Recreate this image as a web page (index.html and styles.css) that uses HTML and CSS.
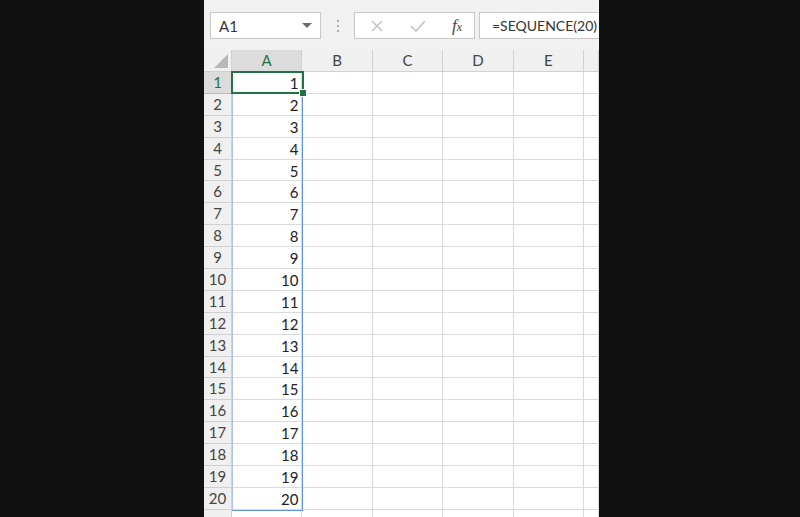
FILE: index.html
```html
<!DOCTYPE html>
<html>
<head>
<title>SEQUENCE</title>
<link rel="stylesheet" href="styles.css">
</head>
<body>
<div class="sheet">
  <div class="bar">
    <div class="namebox"><span>A1</span><span class="caret"></span></div>
    <div class="dots"><i></i><i></i><i></i></div>
    <div class="btns">
      <svg width="14" height="14" viewBox="0 0 14 14"><path d="M2 2 L12 12 M12 2 L2 12" stroke="#c4c4c4" stroke-width="1.6" fill="none"/></svg>
      <svg width="16" height="14" viewBox="0 0 16 14"><path d="M1 7 L6 12 L15 2" stroke="#c4c4c4" stroke-width="1.6" fill="none"/></svg>
      <span class="fx">f<small>x</small></span>
    </div>
    <div class="formula">=SEQUENCE(20)</div>
  </div>

  <div class="grid" id="grid">
    <div class="corner"></div>
    <div class="colhead sel">A</div>
    <div class="colhead">B</div>
    <div class="colhead">C</div>
    <div class="colhead">D</div>
    <div class="colhead">E</div>
    <div class="colhead"></div>
  </div>
  <div class="spill"></div>
  <div class="cursor"><span class="handle"></span></div>
</div>
<script>
var grid = document.getElementById('grid');
for (var r = 1; r <= 21; r++) {
  var html = '<div class="rowhead' + (r == 1 ? ' sel' : '') + '">' + (r <= 20 ? r : '') + '</div>';
  html += '<div class="cell num">' + (r <= 20 ? r : '') + '</div>';
  for (var c = 0; c < 5; c++) html += '<div class="cell"></div>';
  grid.insertAdjacentHTML('beforeend', html);
}
</script>
</body>
</html>
```

FILE: styles.css
```css
body {
  margin: 0;
  background: #111111;
  font-family: Lato, "Open Sans", sans-serif;
  overflow: hidden;
}

.sheet {
  position: relative;
  width: 395px;
  height: 517px;
  margin-left: 204px;
  background: #ffffff;
  overflow: hidden;
}

/* formula bar */
.bar {
  height: 50px;
  background: #f1f1f1;
  display: flex;
  align-items: flex-start;
  padding: 12px 0 0 6px;
  box-sizing: border-box;
}
.bar > div { flex-shrink: 0; }
.namebox {
  width: 111px;
  height: 27px;
  box-sizing: border-box;
  background: #fff;
  border: 1px solid #c8c8c8;
  display: flex;
  align-items: center;
  justify-content: space-between;
  padding: 0 8px 0 8px;
  font-size: 15px;
  color: #333;
}
.caret {
  width: 0; height: 0;
  border-left: 5px solid transparent;
  border-right: 5px solid transparent;
  border-top: 5px solid #6a6a6a;
}
.dots {
  width: 33px;
  display: flex;
  flex-direction: column;
  align-items: center;
  gap: 3px;
  padding-top: 8px;
}
.dots i { width: 2px; height: 2px; background: #b0b0b0; }
.btns {
  width: 121px;
  height: 27px;
  box-sizing: border-box;
  background: #fff;
  border: 1px solid #c8c8c8;
  display: flex;
  align-items: center;
  gap: 26px;
  padding-left: 15px;
}
.fx {
  font-family: "Liberation Serif", serif;
  font-style: italic;
  font-size: 17px;
  color: #444;
}
.fx small { font-size: 12px; }
.bar > .formula {
  margin-left: 4px;
  flex: 1 1 auto;
  min-width: 0;
  height: 27px;
  box-sizing: border-box;
  background: #fff;
  border: 1px solid #c8c8c8;
  border-right: none;
  padding-left: 12px;
  line-height: 25px;
  font-size: 14px;
  color: #333;
  white-space: nowrap;
}

/* cells */
.grid {
  display: grid;
  grid-template-columns: 28px repeat(5, 70.4px) 1fr;
  grid-template-rows: 22px;
  grid-auto-rows: 21.9px;
  font-size: 15px;
  color: #222;
}
.corner, .colhead, .rowhead {
  background: #f0f0f0;
  border-right: 1px solid #d0d0d0;
  border-bottom: 1px solid #d0d0d0;
  color: #444;
}
.corner { position: relative; }
.corner:after {
  content: "";
  position: absolute;
  right: 3px; bottom: 3px;
  border-left: 14px solid transparent;
  border-bottom: 14px solid #b8b8b8;
}
.colhead { text-align: center; line-height: 21px; }
.rowhead { text-align: center; line-height: 21px; }
.colhead.sel, .rowhead.sel {
  background: #dcdcdc;
  color: #217346;
  border-bottom-color: #bababa;
}
.cell {
  border-right: 1px solid #dadada;
  border-bottom: 1px solid #dadada;
}
.num { text-align: right; padding-right: 3px; line-height: 22px; }

/* overlays */
.spill {
  position: absolute;
  left: 28px; top: 72px;
  width: 71px; height: 439px;
  box-sizing: border-box;
  border: 1px solid #5f95de;
  border-left-color: #a9c4ea;
}
.cursor {
  position: absolute;
  left: 27px; top: 71px;
  width: 73px; height: 23px;
  box-sizing: border-box;
  border: 2px solid #217346;
}
.handle {
  position: absolute;
  right: -5px; bottom: -5px;
  width: 6px; height: 6px;
  background: #217346;
  border: 1px solid #fff;
}
```
